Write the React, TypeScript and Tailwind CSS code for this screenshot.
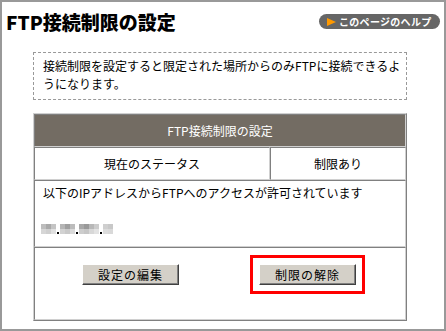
import React from "react";

const Mosaic = ({ cols }: { cols: string[][] }) => (
  <div className="flex">
    {cols.map((c, i) => (
      <div key={i} className="flex flex-col">
        {c.map((color, j) => (
          <div key={j} className="w-[5px] h-[5px]" style={{ backgroundColor: color }} />
        ))}
      </div>
    ))}
  </div>
);

const Dot = () => <div className="w-[2px] h-[2px] bg-black mt-[8px] mx-[1px]" />;

const Btn = ({ label }: { label: string }) => (
  <button className="w-[97px] h-[21px] bg-[#d4d0c8] border border-t-white border-l-white border-r-[#404040] border-b-[#404040] shadow-[inset_-1px_-1px_0_#808080] text-[12px] tracking-[1px] text-black leading-none flex items-center justify-center">
    {label}
  </button>
);

export default function App() {
  return (
    <div className="w-[446px] h-[331px] border-2 border-[#999999] bg-white text-black font-['Noto_Sans_CJK_JP','Liberation_Sans',sans-serif] box-border">
      <div className="flex justify-between items-start pt-[8px] pl-[4px] pr-[4px]">
        <div className="text-[19px] leading-[24px] font-black">FTP接続制限の設定</div>
        <div className="mt-[4px] h-[15px] w-[121px] rounded-full bg-[#666666] flex items-center pl-[8px]">
          <svg width="9" height="8" viewBox="0 0 9 8" className="mr-[3px]">
            <polygon points="0,0 9,4 0,8" fill="#ff9900" />
          </svg>
          <span className="text-white text-[10px] font-bold leading-none tracking-[0.3px]">このページのヘルプ</span>
        </div>
      </div>

      <div className="ml-[31px] mt-[18px] w-[374px] h-[48px] border border-dashed border-[#999999] pl-[9px] pt-[4px] text-[12px] leading-[18px] whitespace-nowrap">
        接続制限を設定すると限定された場所からのみFTPに接続できるよ
        <br />
        うになります。
      </div>

      <div className="ml-[31px] mt-[13px] w-[374px] border border-t-[#d0d0d0] border-l-[#d0d0d0] border-r-[#808080] border-b-[#808080] text-[12px]">
        <div className="h-[33px] bg-[#736c63] border border-t-[#808080] border-l-[#808080] border-r-[#d0d0d0] border-b-[#d0d0d0] flex items-center justify-center text-white">
          FTP接続制限の設定
        </div>
        <div className="flex h-[33px]">
          <div className="w-[236px] border border-t-[#808080] border-l-[#808080] border-r-[#d0d0d0] border-b-[#d0d0d0] flex items-center justify-center">
            現在のステータス
          </div>
          <div className="flex-1 border border-t-[#808080] border-l-[#808080] border-r-[#d0d0d0] border-b-[#d0d0d0] flex items-center justify-center">
            制限あり
          </div>
        </div>
        <div className="h-[67px] border border-t-[#808080] border-l-[#808080] border-r-[#d0d0d0] border-b-[#d0d0d0] pl-[8px] pt-[3px]">
          <div className="leading-[18px]">以下のIPアドレスからFTPへのアクセスが許可されています</div>
          <div className="flex mt-[22px] ml-[-2px] items-start">
            <Mosaic cols={[["#bdbdbd", "#d6d6d6"], ["#a9a9a9", "#cfcfcf"], ["#c4c4c4", "#e0e0e0"]]} />
            <Dot />
            <Mosaic cols={[["#b5b5b5", "#d2d2d2"], ["#9f9f9f", "#c9c9c9"], ["#bcbcbc", "#dadada"]]} />
            <Dot />
            <Mosaic cols={[["#a8a8a8", "#cdcdcd"], ["#999999", "#c6c6c6"], ["#b8b8b8", "#d8d8d8"], ["#cccccc", "#e3e3e3"]]} />
            <Dot />
            <Mosaic cols={[["#cfcfcf", "#dcdcdc"], ["#c8c8c8", "#d9d9d9"]]} />
          </div>
        </div>
        <div className="h-[73px] border border-t-[#808080] border-l-[#808080] border-r-[#d0d0d0] border-b-[#d0d0d0] flex items-start">
          <div className="ml-[47px] mt-[16px]">
            <Btn label="設定の編集" />
          </div>
          <div className="ml-[71px] mt-[7px] w-[115px] h-[39px] border-[3px] border-[#ff0000] flex items-center justify-center">
            <Btn label="制限の解除" />
          </div>
        </div>
      </div>
    </div>
  );
}
